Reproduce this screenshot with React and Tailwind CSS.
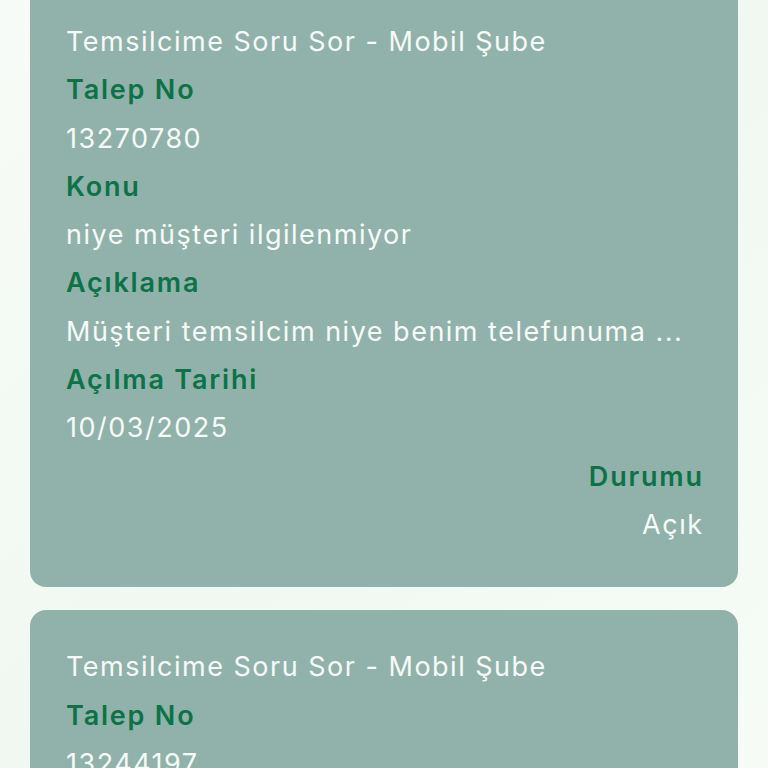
import React from "react";

const font = { fontFamily: "Inter, 'Noto Sans', sans-serif" };

function Label({ children, right }) {
  return (
    <div className={`text-[27px] leading-[48.3px] font-semibold text-[#0b7347] tracking-[1.8px] ${right ? "text-right -mr-[1.8px]" : ""}`}>
      {children}
    </div>
  );
}
function Value({ children, right }) {
  return (
    <div className={`text-[27px] leading-[48.3px] font-normal text-[#f7faf8] tracking-[1.5px] whitespace-nowrap ${right ? "text-right -mr-[1.5px]" : ""}`}>
      {children}
    </div>
  );
}

function Card({ no, konu, aciklama, tarih, durum }) {
  return (
    <div className="bg-[#91b2aa] rounded-[16px] pt-[33px] pb-[38px] px-[36px] overflow-hidden">
      <Value>Temsilcime Soru Sor - Mobil Şube</Value>
      <Label>Talep No</Label>
      <Value>{no}</Value>
      <Label>Konu</Label>
      <Value>{konu}</Value>
      <Label>Açıklama</Label>
      <Value>{aciklama}</Value>
      <Label>Açılma Tarihi</Label>
      <Value>{tarih}</Value>
      <Label right>Durumu</Label>
      <Value right>{durum}</Value>
    </div>
  );
}

export default function App() {
  return (
    <div
      className="w-[768px] h-[768px] overflow-hidden bg-gradient-to-br from-[#f7fbf7] via-[#f1f8f1] to-[#f6fbf6]"
      style={font}
    >
      <div className="-mt-[15px] px-[30px] flex flex-col gap-[23px]">
        <Card
          no="13270780"
          konu="niye müşteri ilgilenmiyor"
          aciklama="Müşteri temsilcim niye benim telefunuma ..."
          tarih="10/03/2025"
          durum="Açık"
        />
        <Card
          no="13244197"
          konu="niye müşteri ilgilenmiyor"
          aciklama="Müşteri temsilcim niye benim telefunuma ..."
          tarih="10/03/2025"
          durum="Açık"
        />
      </div>
    </div>
  );
}
